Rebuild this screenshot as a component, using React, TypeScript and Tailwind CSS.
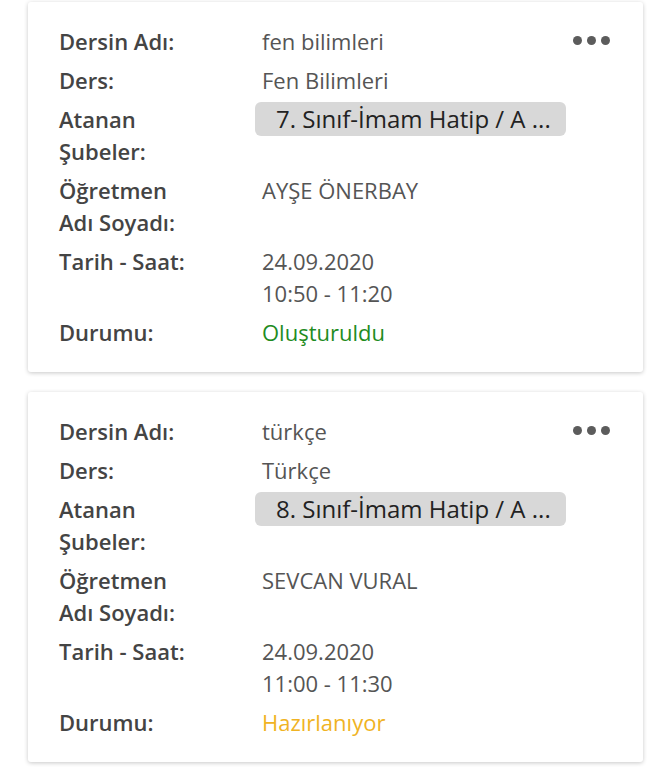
import React from 'react';

type Lesson = {
  name: string;
  course: string;
  branch: string;
  teacher: string;
  date: string;
  time: string;
  status: string;
  statusClass: string;
};

const lessons: Lesson[] = [
  {
    name: 'fen bilimleri',
    course: 'Fen Bilimleri',
    branch: '7. Sınıf-İmam Hatip / A ...',
    teacher: 'AYŞE ÖNERBAY',
    date: '24.09.2020',
    time: '10:50 - 11:20',
    status: 'Oluşturuldu',
    statusClass: 'text-[#1f8c1f]',
  },
  {
    name: 'türkçe',
    course: 'Türkçe',
    branch: '8. Sınıf-İmam Hatip / A ...',
    teacher: 'SEVCAN VURAL',
    date: '24.09.2020',
    time: '11:00 - 11:30',
    status: 'Hazırlanıyor',
    statusClass: 'text-[#f0b323]',
  },
];

const Row: React.FC<{ label: string; children: React.ReactNode }> = ({ label, children }) => (
  <div className="flex">
    <div className="w-[203px] shrink-0 pr-[62px] font-semibold text-[#444]">{label}</div>
    <div className="flex-1 text-[#555]">{children}</div>
  </div>
);

const LessonCard: React.FC<{ lesson: Lesson }> = ({ lesson }) => (
  <div className="bg-white rounded-[3px] shadow-[0_1px_4px_rgba(0,0,0,0.22)] pl-[31px] pr-[33px] pt-[23px] pb-[24px]">
    <div className="flex flex-col gap-[7px] text-[22px] leading-[32px]">
      <div className="flex">
        <div className="w-[203px] shrink-0 pr-[62px] font-semibold text-[#444]">Dersin Adı:</div>
        <div className="flex-1 text-[#555]">{lesson.name}</div>
        <div className="flex gap-[5px] items-center h-[32px] pb-[2px]">
          <span className="w-[9px] h-[9px] rounded-full bg-[#5c5c5c]" />
          <span className="w-[9px] h-[9px] rounded-full bg-[#5c5c5c]" />
          <span className="w-[9px] h-[9px] rounded-full bg-[#5c5c5c]" />
        </div>
      </div>
      <Row label="Ders:">{lesson.course}</Row>
      <Row label="Atanan Şubeler:">
        <span className="inline-block -ml-[7px] w-[311px] h-[34px] -mt-[1px] rounded-[6px] bg-[#d8d8d8] pl-[21px] text-[24px] leading-[34px] text-[#222] whitespace-nowrap">
          {lesson.branch}
        </span>
      </Row>
      <Row label="Öğretmen Adı Soyadı:">{lesson.teacher}</Row>
      <Row label="Tarih - Saat:">
        <div>{lesson.date}</div>
        <div>{lesson.time}</div>
      </Row>
      <Row label="Durumu:">
        <span className={lesson.statusClass}>{lesson.status}</span>
      </Row>
    </div>
  </div>
);

export default function App() {
  return (
    <div className="min-h-screen bg-white pt-[2px] px-[28px] flex flex-col gap-[20px]" style={{ fontFamily: '"Open Sans", sans-serif' }}>
      {lessons.map((l) => (
        <LessonCard key={l.name} lesson={l} />
      ))}
    </div>
  );
}
